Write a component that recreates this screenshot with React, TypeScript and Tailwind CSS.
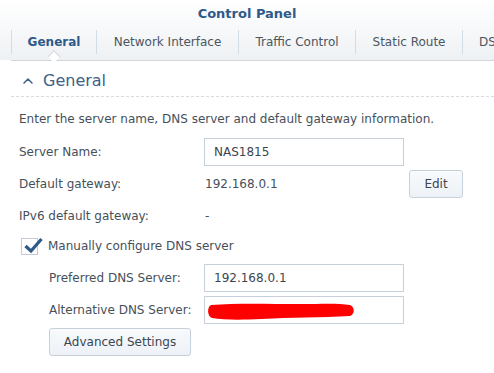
import { ChevronUp } from "lucide-react";

const font = { fontFamily: '"DejaVu Sans", Verdana, sans-serif' };

function Tab({ label, width, active }: { label: string; width: string; active?: boolean }) {
  return (
    <div
      className={`relative flex h-[24px] shrink-0 items-center justify-center border-l border-[#d3dde8] ${width} ${
        active ? "font-bold text-[#2e5a8a]" : "text-[#4c5661]"
      }`}
    >
      {label}
      {active && (
        // little notch that sits on the header's bottom line
        <span className="absolute bottom-[-7px] left-1/2 h-[9px] w-[9px] -translate-x-1/2 rotate-45 border-l border-t border-[#cfd4d9] bg-white" />
      )}
    </div>
  );
}

function Input({ value, children }: { value?: string; children?: React.ReactNode }) {
  return (
    <div className="relative flex h-[28px] w-[200px] items-center border border-[#c7d0da] bg-white px-[9px] text-[#3c4650]">
      {value}
      {children}
    </div>
  );
}

function Button({ label, className }: { label: string; className?: string }) {
  return (
    <button
      type="button"
      className={`flex h-[28px] items-center justify-center rounded-[3px] border border-[#c6d0db] bg-gradient-to-b from-[#f8fafc] to-[#edf2f7] text-[#3c4650] ${className ?? ""}`}
    >
      {label}
    </button>
  );
}

export default function App() {
  return (
    <div className="h-[373px] w-[494px] overflow-hidden bg-white text-[12px]" style={font}>
      {/* Header */}
      <div className="h-[60px] bg-gradient-to-b from-white to-[#eef1f4] pt-[5px]">
        <div className="text-center text-[13px] font-bold leading-[18px] text-[#2e5a8a]">Control Panel</div>
        <div className="ml-[11px] mt-[7px] flex border-b border-[#d2d6da] pb-[6px]">
          <Tab label="General" width="w-[85px]" active />
          <Tab label="Network Interface" width="w-[142px]" />
          <Tab label="Traffic Control" width="w-[117px]" />
          <Tab label="Static Route" width="w-[107px]" />
          <div className="flex h-[24px] items-center border-l border-[#d3dde8] pl-[16px] text-[#4c5661]">DS</div>
        </div>
      </div>

      {/* Section title */}
      <div className="ml-[11px] flex h-[37px] items-center border-b border-dashed border-[#d6dbe0] pt-[6px]">
        <ChevronUp size={16} strokeWidth={2.2} className="ml-[9px] text-[#3d5f88]" />
        <span className="ml-[7px] text-[16px] text-[#3d5f88]">General</span>
      </div>

      <div className="pl-[19px] text-[#46505a]">
        <div className="mt-[14px] leading-[16px]">
          Enter the server name, DNS server and default gateway information.
        </div>

        <div className="mt-[11px] flex h-[28px] items-center">
          <div className="w-[185px]">Server Name:</div>
          <Input value="NAS1815" />
        </div>

        <div className="mt-[4px] flex h-[28px] items-center">
          <div className="w-[185px]">Default gateway:</div>
          <div className="w-[205px] pl-[1px]">192.168.0.1</div>
          <Button label="Edit" className="w-[54px]" />
        </div>

        <div className="mt-[4px] flex h-[28px] items-center">
          <div className="w-[185px]">IPv6 default gateway:</div>
          <div className="pl-[1px]">-</div>
        </div>

        <div className="mt-[3px] flex h-[26px] items-center">
          <div className="relative ml-[2px] h-[17px] w-[17px] border border-[#c3ccd6] bg-white">
            <svg width="20" height="18" viewBox="0 0 20 18" className="absolute left-[1px] top-[-3px]">
              <path d="M2.5 10 L8 15 L18.5 3" fill="none" stroke="#2e5a8a" strokeWidth="3.2" />
            </svg>
          </div>
          <span className="ml-[10px]">Manually configure DNS server</span>
        </div>

        <div className="mt-[5px] flex h-[28px] items-center pl-[30px]">
          <div className="w-[155px]">Preferred DNS Server:</div>
          <Input value="192.168.0.1" />
        </div>

        <div className="mt-[4px] flex h-[28px] items-center pl-[30px]">
          <div className="w-[155px]">Alternative DNS Server:</div>
          <Input>
            <svg width="152" height="22" viewBox="0 0 152 22" className="absolute left-[1px] top-[3px]">
              <path
                d="M5 5 C30 3 60 4 95 4 C115 4 132 3 144 5 C149 7 149 14 144 16 C115 18 85 17 55 19 C35 20 18 20 6 18 C1 16 1 7 5 5 Z"
                fill="#ff0000"
              />
            </svg>
          </Input>
        </div>

        <div className="ml-[30px] mt-[4px]">
          <Button label="Advanced Settings" className="w-[142px]" />
        </div>
      </div>
    </div>
  );
}
